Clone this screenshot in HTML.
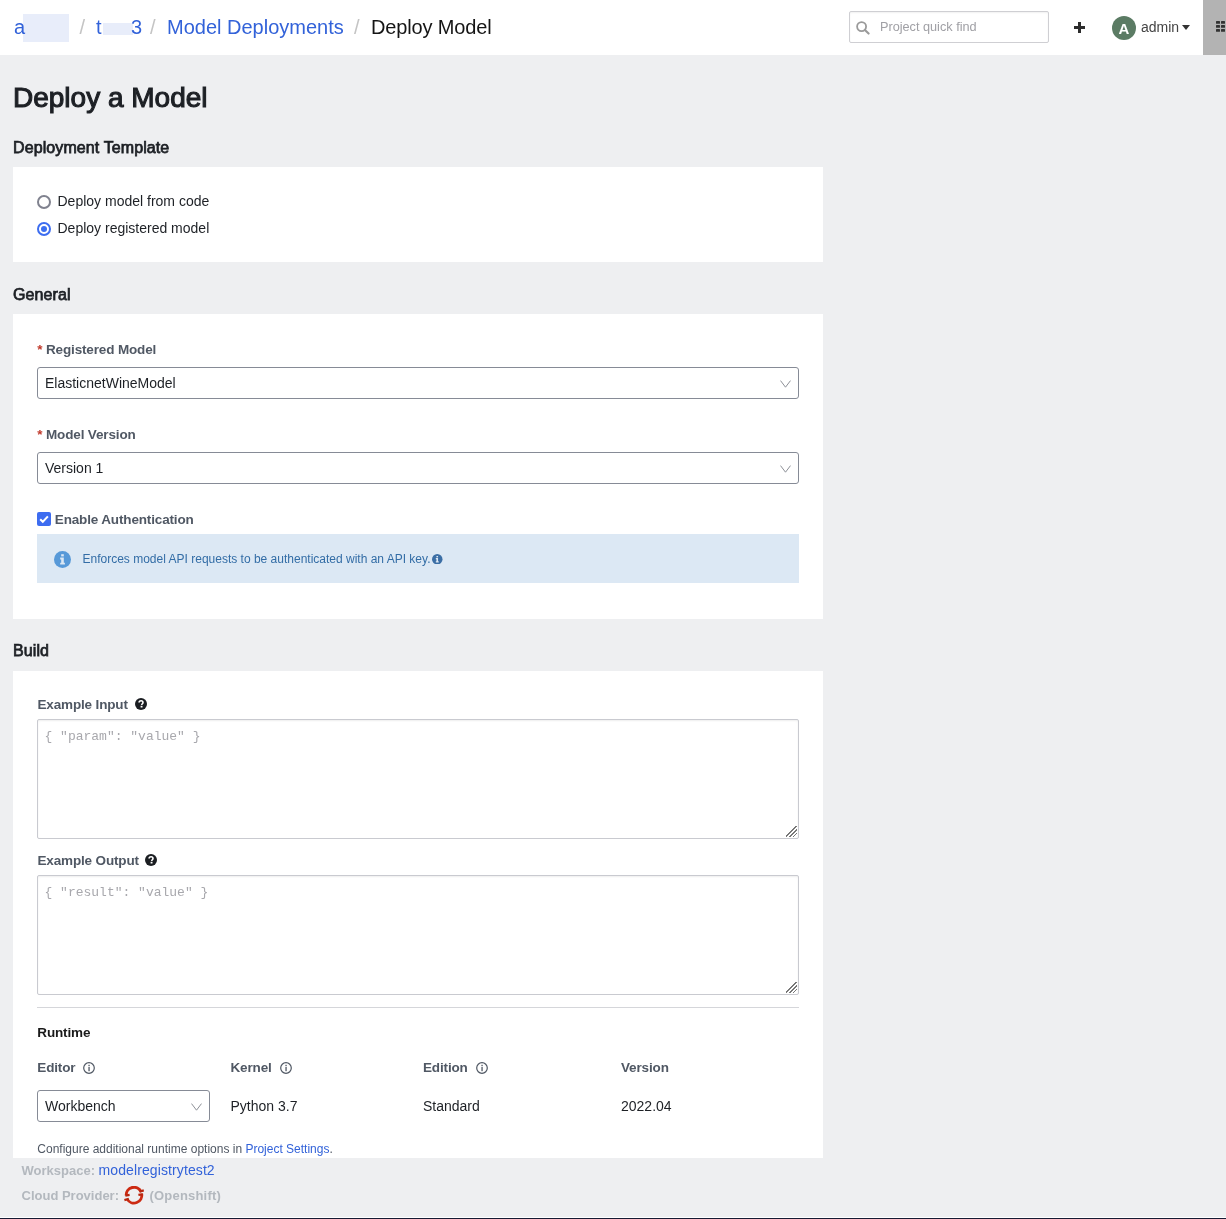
<!DOCTYPE html>
<html><head><meta charset="utf-8">
<style>
*{box-sizing:border-box;margin:0;padding:0}
html,body{width:1226px;height:1219px;overflow:hidden}
body{-webkit-font-smoothing:antialiased;will-change:transform}
body{background:#eeeff1;font-family:"Liberation Sans",sans-serif;position:relative;color:#222}
.abs{position:absolute;white-space:nowrap}
#hdr{position:absolute;left:0;top:0;width:1226px;height:55px;background:#fff}
.bc{position:absolute;top:16px;font-size:20px;line-height:23px}
.blue{color:#3262d9}
.sep{color:#c4c4c4}
.blur{position:absolute;background:#e8edfa}
.search{position:absolute;left:849px;top:11px;width:200px;height:32px;border:1px solid #cfcfd3;border-radius:2px;background:#fff;box-shadow:inset 0 1px 2px rgba(0,0,0,.06)}
.card{position:absolute;left:13px;width:810px;background:#fff}
.h2{position:absolute;left:13px;font-size:16px;font-weight:bold;color:#1d2025}
.lbl{position:absolute;font-size:14px;font-weight:bold;color:#505864}
.req{color:#c0392b}
.sel{position:absolute;border:1px solid #868b96;border-radius:3px;background:#fff;height:31px}
.sel span{position:absolute;left:7px;font-size:14px;color:#1d2025}
.ta{position:absolute;left:37px;width:762px;height:120px;border:1px solid #c9cad0;border-radius:2px;background:#fff;box-shadow:inset 0 1px 2px rgba(0,0,0,.07)}
.mono{font-family:"Liberation Mono",monospace;font-size:13px;color:#a8a8ad}
.txt{position:absolute;font-size:14px;color:#1d2025}
.t{line-height:1}
.h2{line-height:1;font-size:16px!important;letter-spacing:0.1px;font-weight:normal!important;-webkit-text-stroke:0.75px #1d2025}
.lbl{line-height:1;font-size:13.5px!important;letter-spacing:-0.15px;white-space:nowrap}
.txt{line-height:1;white-space:nowrap}
.radio{position:absolute;width:14px;height:14px;border-radius:50%;border:2px solid #80828f;background:#fff}
.radio.on{border:2px solid #3d6df0}
.radio.on::after{content:"";position:absolute;left:2px;top:2px;width:6px;height:6px;border-radius:50%;background:#3b6ef0}
.chk{position:absolute;width:14px;height:14px;border-radius:2px;background:#3d6cf0}
.chk svg{position:absolute;left:0;top:0}
.alert{position:absolute;background:#dce8f4}
.sel span{top:0;line-height:1}
.chev{position:absolute;right:7.5px;top:11.5px}
.q,.ic{position:absolute}
.grip{position:absolute;right:1px;bottom:1px;width:11px;height:11px;background:linear-gradient(135deg,transparent 0 45%,#777 45% 52%,transparent 52% 62%,#777 62% 69%,transparent 69% 79%,#777 79% 86%,transparent 86%)}
</style></head><body>
<div id="hdr">
  <div class="bc blue" style="left:14px;z-index:2">a</div>
  <div class="blur" style="left:23px;top:14px;width:46px;height:28px"></div>
  <div class="bc sep" style="left:79.5px">/</div>
  <div class="bc blue" style="left:96px">t</div>
  <div class="blur" style="left:103px;top:23px;width:30px;height:12px"></div>
  <div class="bc blue" style="left:131px">3</div>
  <div class="bc sep" style="left:150px">/</div>
  <div class="bc blue" style="left:167px">Model Deployments</div>
  <div class="bc sep" style="left:354px">/</div>
  <div class="bc" style="left:371px;color:#151515;letter-spacing:-0.15px">Deploy Model</div>
  <div class="search">
    <svg style="position:absolute;left:5.8px;top:8.8px" width="14" height="14" viewBox="0 0 14 14"><circle cx="5.6" cy="5.6" r="4.5" fill="none" stroke="#9a9a9a" stroke-width="1.8"/><line x1="8.9" y1="8.9" x2="12.6" y2="12.6" stroke="#9a9a9a" stroke-width="2.1" stroke-linecap="round"/></svg>
    <div class="abs" style="left:30px;top:8.2px;font-size:12.7px;color:#a0a0a5">Project quick find</div>
  </div>
  <svg style="position:absolute;left:1074px;top:22px" width="11" height="11" viewBox="0 0 11 11"><rect x="4" y="0" width="3" height="11" fill="#2d2d2d"/><rect x="0" y="4" width="11" height="3" fill="#2d2d2d"/></svg>
  <div class="abs" style="left:1112px;top:16px;width:24px;height:24px;border-radius:50%;background:#5b7b64;color:#fff;font-size:15px;font-weight:bold;text-align:center;line-height:25px">A</div>
  <div class="abs" style="left:1141px;top:19.5px;font-size:14px;line-height:1;color:#444">admin</div>
  <svg style="position:absolute;left:1182px;top:25px" width="8" height="5" viewBox="0 0 8 5"><path d="M0 0H8L4 5Z" fill="#333"/></svg>
  <div class="abs" style="left:1203px;top:0;width:23px;height:55px;background:#b3b3b3"></div>
  <svg style="position:absolute;left:1216px;top:21px" width="14" height="11" viewBox="0 0 14 11"><g fill="#333"><rect x="0" y="0" width="4" height="2.8" rx="0.5"/><rect x="5" y="0" width="4" height="2.8" rx="0.5"/><rect x="10" y="0" width="4" height="2.8" rx="0.5"/><rect x="0" y="4" width="4" height="2.8" rx="0.5"/><rect x="5" y="4" width="4" height="2.8" rx="0.5"/><rect x="10" y="4" width="4" height="2.8" rx="0.5"/><rect x="0" y="8" width="4" height="2.8" rx="0.5"/><rect x="5" y="8" width="4" height="2.8" rx="0.5"/><rect x="10" y="8" width="4" height="2.8" rx="0.5"/></g></svg>
</div>

<div class="abs t" style="left:13px;top:83.5px;font-size:28px;font-weight:normal;-webkit-text-stroke:1.1px #1d2025;color:#1d2025;letter-spacing:0px">Deploy a Model</div>
<div class="h2" style="top:140.4px">Deployment Template</div>

<div class="card" style="top:167px;height:95px"></div>
<div class="radio" style="left:37px;top:195px"></div>
<div class="txt" style="left:57.5px;top:194.2px">Deploy model from code</div>
<div class="radio on" style="left:37px;top:222px"></div>
<div class="txt" style="left:57.5px;top:220.5px">Deploy registered model</div>

<div class="h2" style="top:286.5px">General</div>
<div class="card" style="top:314px;height:305px"></div>
<div class="lbl" style="left:37.3px;top:342.57px"><span class="req">*</span> Registered Model</div>
<div class="sel" style="left:37px;top:367px;width:762px;height:32px"><span style="top:8.2px">ElasticnetWineModel</span><svg class="chev" width="11" height="8" viewBox="0 0 11 8"><path d="M0.5 0.6L5.5 7.2L10.5 0.6" fill="none" stroke="#8d9097" stroke-width="1"/></svg></div>
<div class="lbl" style="left:37.3px;top:427.57px"><span class="req">*</span> Model Version</div>
<div class="sel" style="left:37px;top:452px;width:762px;height:32px"><span style="top:8.2px">Version 1</span><svg class="chev" width="11" height="8" viewBox="0 0 11 8"><path d="M0.5 0.6L5.5 7.2L10.5 0.6" fill="none" stroke="#8d9097" stroke-width="1"/></svg></div>
<div class="chk" style="left:37px;top:512px"><svg width="14" height="14" viewBox="0 0 14 14"><path d="M3.2 7.2L5.8 9.8L10.9 4.4" fill="none" stroke="#fff" stroke-width="2"/></svg></div>
<div class="lbl" style="left:54.8px;top:512.57px">Enable Authentication</div>
<div class="alert" style="left:37px;top:534px;width:762px;height:49px">
  <svg style="position:absolute;left:16.5px;top:17px" width="17" height="17" viewBox="0 0 17 17"><circle cx="8.5" cy="8.5" r="8.5" fill="#5799d8"/><rect x="7.2" y="3.2" width="2.6" height="2.2" fill="#dce8f4"/><path d="M6.2 6.6H9.8V11.8H10.9V13.6H6.2V11.8H7.2V8.4H6.2Z" fill="#dce8f4"/></svg>
  <div class="abs" style="left:45.5px;top:18.8px;font-size:12px;line-height:1;color:#336da6">Enforces model API requests to be authenticated with an API key.</div>
  <svg style="position:absolute;left:395px;top:19.5px" width="10.5" height="10.5" viewBox="0 0 17 17"><circle cx="8.5" cy="8.5" r="8.5" fill="#3b6ea5"/><rect x="7.2" y="3.2" width="2.6" height="2.2" fill="#dce8f4"/><path d="M6.2 6.6H9.8V11.8H10.9V13.6H6.2V11.8H7.2V8.4H6.2Z" fill="#dce8f4"/></svg>
</div>

<div class="h2" style="top:642.5px">Build</div>
<div class="card" style="top:671px;height:487px"></div>
<div class="lbl" style="left:37.5px;top:697.57px">Example Input</div>
<svg class="q" style="left:135px;top:698px" width="12" height="12" viewBox="0 0 12 12"><circle cx="6" cy="6" r="6" fill="#1b1e22"/><path d="M4.1 4.6C4.1 3.4 5 2.7 6.1 2.7C7.2 2.7 8 3.4 8 4.4C8 5.6 6.7 5.8 6.7 6.9" fill="none" stroke="#fff" stroke-width="1.6"/><rect x="5.6" y="7.8" width="1.9" height="1.7" fill="#fff"/></svg>
<div class="ta" style="top:719px"><div class="mono" style="position:absolute;left:6.5px;top:9.5px;line-height:1">{ "param": "value" }</div><i class="grip"></i></div>
<div class="lbl" style="left:37.5px;top:853.87px">Example Output</div>
<svg class="q" style="left:145px;top:854px" width="12" height="12" viewBox="0 0 12 12"><circle cx="6" cy="6" r="6" fill="#1b1e22"/><path d="M4.1 4.6C4.1 3.4 5 2.7 6.1 2.7C7.2 2.7 8 3.4 8 4.4C8 5.6 6.7 5.8 6.7 6.9" fill="none" stroke="#fff" stroke-width="1.6"/><rect x="5.6" y="7.8" width="1.9" height="1.7" fill="#fff"/></svg>
<div class="ta" style="top:875px"><div class="mono" style="position:absolute;left:6.5px;top:9.5px;line-height:1">{ "result": "value" }</div><i class="grip"></i></div>
<div class="abs" style="left:37px;top:1007px;width:762px;height:1px;background:#d5d6da"></div>
<div class="lbl" style="left:37.3px;top:1025.77px;color:#1a1a1a">Runtime</div>
<div class="lbl" style="left:37.3px;top:1060.77px">Editor</div>
<svg class="ic" style="left:83px;top:1062px" width="12" height="12" viewBox="0 0 12 12"><circle cx="6" cy="6" r="5.3" fill="none" stroke="#505864" stroke-width="1.2"/><rect x="5.4" y="2.8" width="1.3" height="1.3" fill="#505864"/><rect x="5.4" y="4.9" width="1.3" height="4.3" fill="#505864"/></svg>
<div class="lbl" style="left:230.5px;top:1060.77px">Kernel</div>
<svg class="ic" style="left:280px;top:1062px" width="12" height="12" viewBox="0 0 12 12"><circle cx="6" cy="6" r="5.3" fill="none" stroke="#505864" stroke-width="1.2"/><rect x="5.4" y="2.8" width="1.3" height="1.3" fill="#505864"/><rect x="5.4" y="4.9" width="1.3" height="4.3" fill="#505864"/></svg>
<div class="lbl" style="left:423px;top:1060.77px">Edition</div>
<svg class="ic" style="left:476px;top:1062px" width="12" height="12" viewBox="0 0 12 12"><circle cx="6" cy="6" r="5.3" fill="none" stroke="#505864" stroke-width="1.2"/><rect x="5.4" y="2.8" width="1.3" height="1.3" fill="#505864"/><rect x="5.4" y="4.9" width="1.3" height="4.3" fill="#505864"/></svg>
<div class="lbl" style="left:621px;top:1060.77px">Version</div>
<div class="sel" style="left:37px;top:1090px;width:173px;height:32px"><span style="top:7.8px">Workbench</span><svg class="chev" width="11" height="8" viewBox="0 0 11 8"><path d="M0.5 0.6L5.5 7.2L10.5 0.6" fill="none" stroke="#8d9097" stroke-width="1"/></svg></div>
<div class="txt" style="left:230.5px;top:1098.7px">Python 3.7</div>
<div class="txt" style="left:423px;top:1098.7px">Standard</div>
<div class="txt" style="left:621px;top:1098.7px">2022.04</div>
<div class="abs" style="left:37.3px;top:1143.2px;font-size:12px;line-height:1;color:#505864">Configure additional runtime options in <span class="blue">Project Settings</span>.</div>

<div class="abs" style="left:21.5px;top:1162.5px;font-size:13px;line-height:1;font-weight:bold;color:#b3b8be">Workspace: <span class="blue" style="font-weight:normal;font-size:14px;letter-spacing:0.1px">modelregistrytest2</span></div>
<div class="abs" style="left:21.5px;top:1188.9px;font-size:13px;line-height:1;font-weight:bold;color:#b3b8be">Cloud Provider:</div>
<svg style="position:absolute;left:123.6px;top:1186.4px" width="20" height="19" viewBox="0 0 20 19"><g fill="none" stroke="#cc2a12" stroke-width="2.9"><path d="M2.2 9.5A7.8 7.8 0 0 1 17.1 5.9"/><path d="M17.6 7.6A7.8 7.8 0 0 1 3.2 13.1"/></g><g stroke="#b8260f" stroke-width="2.2"><path d="M15.6 5.6L19.8 4.3"/><path d="M1.4 9.6L5.6 8.9"/><path d="M18.6 8.3L14.4 8.9"/><path d="M4.8 12.7L0.4 14.1"/></g></svg>
<div class="abs" style="left:149.5px;top:1188.9px;font-size:13px;line-height:1;font-weight:bold;color:#b3b8be;letter-spacing:0.2px">(Openshift)</div>
<div class="abs" style="left:0;top:1217px;width:1226px;height:1px;background:#fff"></div>
<div class="abs" style="left:0;top:1218px;width:1226px;height:1px;background:#161a33"></div>
</body></html>
